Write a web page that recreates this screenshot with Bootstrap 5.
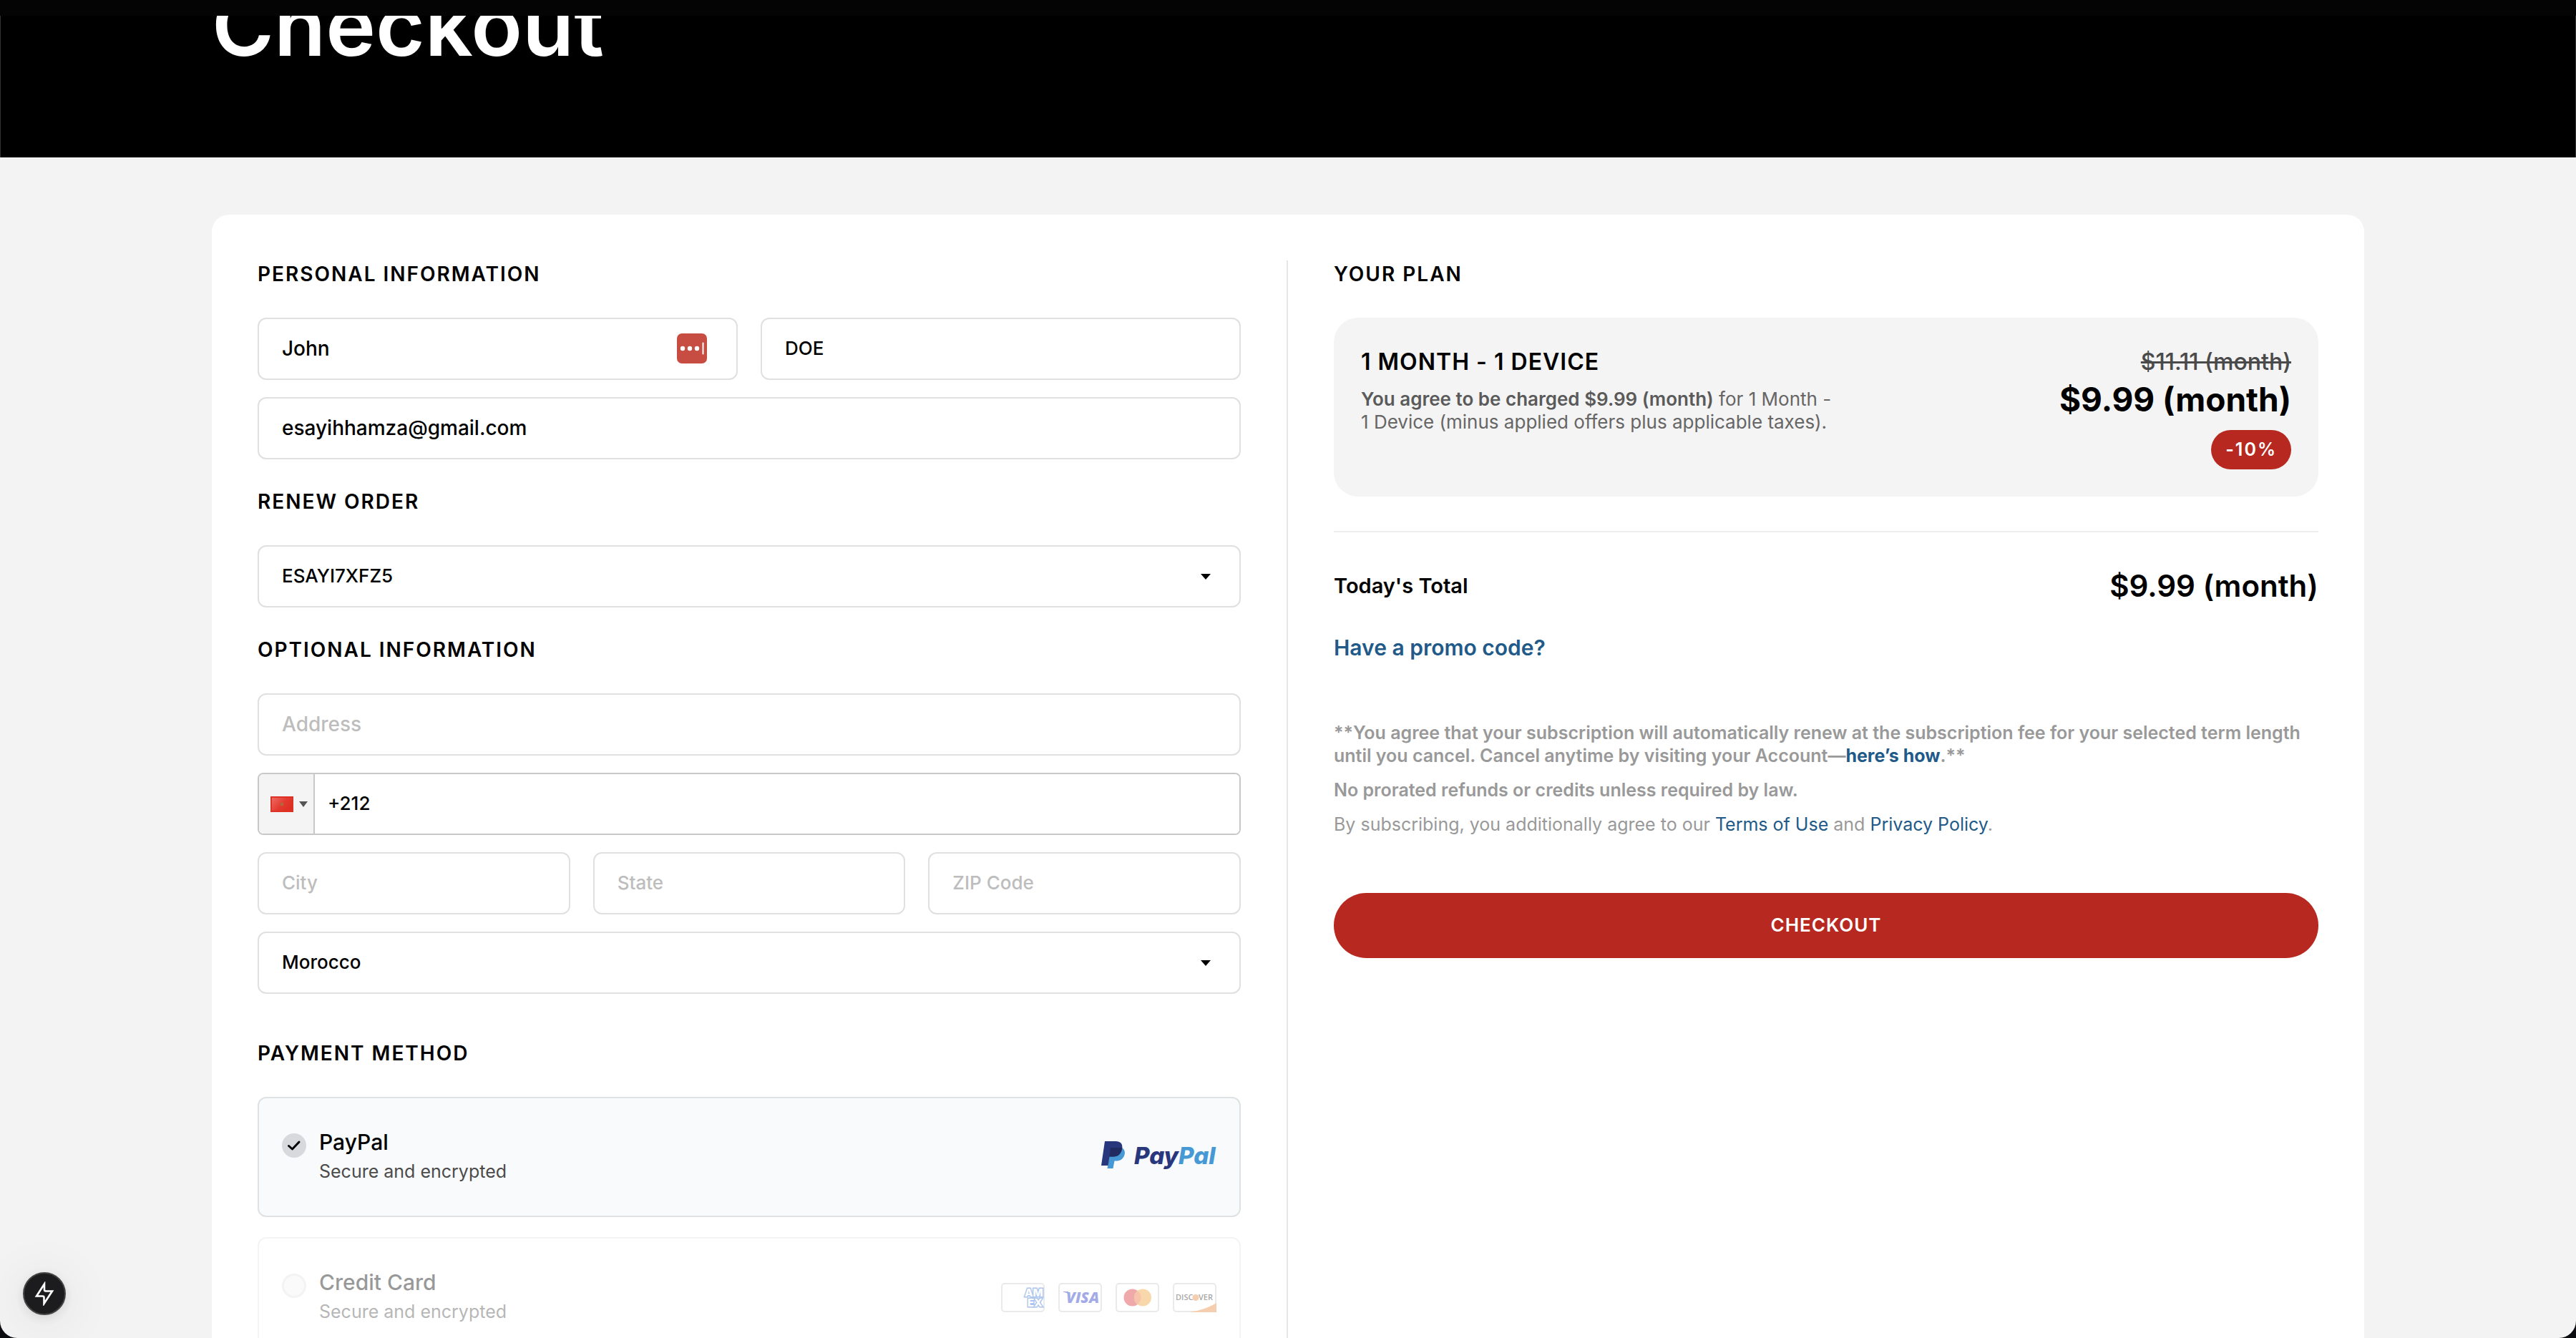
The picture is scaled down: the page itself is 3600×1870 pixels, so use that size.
<!DOCTYPE html>
<html lang="en">
<head>
<meta charset="utf-8">
<meta name="viewport" content="width=device-width, initial-scale=1">
<title>Checkout</title>
<link href="https://cdn.jsdelivr.net/npm/bootstrap@5.3.0/dist/css/bootstrap.min.css" rel="stylesheet">
<style>
  :root { --brand: #b72920; --line: #dfe0e0; --link: #215a88; }
  html { background: #0b0d10; }
  body { font-family: Inter, "Open Sans", sans-serif; color: #000; background: transparent; font-size: 26px; }
  a { color: var(--link); text-decoration: none; }
  .app-window { height: 100vh; overflow: hidden; background: #f3f3f3; border-radius: 0 0 24px 24px; }
  .site-bar { height: 22px; background: #040404; z-index: 5; }
  .wrap { width: 100%; max-width: 3008px; margin-inline: auto; }
  .hero { height: 220px; padding-bottom: 125px; background: #000; color: #fff; box-shadow: inset 1px 0 #333, inset -1px 0 #333; }
  .hero h1 { font-size: 118px; line-height: 120px; font-weight: 600; }
  .sheet { margin-top: 80px; padding: 64px; min-height: 1800px; background: #fff; border-radius: 24px; }
  .sheet-row { min-height: 1672px; }
  .pane-left { padding-right: 64px; border-right: 2px solid #e6e6e6; }
  .pane-right { padding-left: 64px; }
  .section-title { font-size: 28px; line-height: 38px; font-weight: 600; letter-spacing: 2px; text-transform: uppercase; margin: 40px 0 42px; }
  .section-title.first { margin-top: 0; }
  .section-title.spaced { margin-top: 64px; }
  .stack { display: flex; flex-direction: column; gap: 24px; }
  .fields { display: flex; gap: 32px; }
  .fields > * { flex: 1 1 0; min-width: 0; }
  .field { height: 87px; padding: 0 32px 2px; border: 2px solid var(--line); border-radius: 12px; font-size: 26px; font-weight: 500; color: #000; background-color: #fff; }
  .field.big { font-size: 28px; }
  .field::placeholder { color: #bdbdbd; opacity: 1; }
  select.field { background-image: url("data:image/svg+xml,%3Csvg xmlns='http://www.w3.org/2000/svg' viewBox='0 0 14 8'%3E%3Cpath d='M0 0h14L7 8z'/%3E%3C/svg%3E"); background-size: 14px 8px; background-position: right 40px center; }
  .pass-icon { right: 43px; top: 22px; width: 42px; height: 42px; }
  .phone { height: 87px; border: 2px solid #c8c8c8; border-radius: 8px; overflow: hidden; }
  .flag-btn { width: 78px; padding: 0 0 0 16px; gap: 8px; background: #f4f4f4; border: 0; border-right: 2px solid #c8c8c8; }
  .phone .field { height: auto; border: 0; border-radius: 0; padding: 0 18px 2px; }
  .pay-list { display: flex; flex-direction: column; gap: 28px; }
  .pay-option { height: 168px; padding: 0 32px; border: 2px solid #dfe2e2; border-radius: 12px; }
  .pay-option.selected { background: #f9fafc; }
  .pay-option.muted { border-color: #f4f4f4; }
  .pay-option.muted > * { opacity: .4; }
  .pay-radio { width: 34px; height: 34px; margin: 8px 18px 0 0; border: 3px solid #e2e2e2; background-color: #f5f5f5; }
  .pay-radio:checked { border: 0; background-color: #d8d9dc; background-size: 20px 20px; background-image: url("data:image/svg+xml,%3Csvg xmlns='http://www.w3.org/2000/svg' viewBox='0 0 20 20'%3E%3Cpath d='M2.500 10.500l5 4.500 9.500-10' fill='none' stroke='%23000' stroke-width='3' stroke-linecap='round' stroke-linejoin='round'/%3E%3C/svg%3E"); }
  .pay-name { display: block; font-size: 30px; line-height: 40px; font-weight: 500; }
  .pay-note { display: block; font-size: 25px; line-height: 42px; color: #4b4b4b; }
  .pay-brands { gap: 19px; }
  .plan { min-height: 250px; padding: 42px 38px 38px; background: #f4f4f4; border-radius: 34px; }
  .plan-name { font-size: 32px; line-height: 40px; font-weight: 600; letter-spacing: 1px; margin: 0 0 16px; }
  .plan-text { font-size: 26px; line-height: 32px; color: #666; max-width: 670px; }
  .plan-text strong, .terms strong { font-weight: 600; }
  .plan-text strong { color: #5a5a5a; }
  .old-price { font-size: 32px; line-height: 40px; font-weight: 500; color: #4a4a4a; }
  .new-price { font-size: 46px; line-height: 60px; font-weight: 700; margin: 2px 0 13px; }
  .off-badge { display: inline-block; padding: 0 20px; font-size: 25px; line-height: 55px; font-weight: 600; letter-spacing: 2px; color: #fff; background: var(--brand); border-radius: 28px; }
  .rule { height: 2px; margin: 48px 0 45px; background: #eee; border: 0; opacity: 1; }
  .total-row { line-height: 60px; font-weight: 600; }
  .total-label { font-size: 29px; }
  .total-value { font-size: 42px; }
  .promo { display: inline-block; margin-top: 36px; font-size: 30px; line-height: 40px; font-weight: 600; }
  .terms { margin-top: 82px; font-size: 25px; line-height: 32px; color: #999; }
  .terms p { margin-bottom: 16px; }
  .checkout-btn { margin-top: 80px; height: 91px; padding: 0 0 2px; border: 0; border-radius: 46px; color: #fff; background: var(--brand); font-size: 26px; font-weight: 600; letter-spacing: 1px; }
  .dev-btn { left: 32px; bottom: 32px; width: 60px; height: 60px; padding: 0; border: 2px solid #444; border-radius: 50%; background: #1c1c1e; box-shadow: 0 8px 70px 10px rgba(0,0,0,.06), 0 4px 16px rgba(0,0,0,.1); }
</style>
</head>
<body>
<div class="app-window">
  <div class="site-bar fixed-top"></div>
  <header class="hero d-flex align-items-end">
    <div class="wrap"><h1 class="m-0">Checkout</h1></div>
  </header>

  <main class="wrap sheet">
    <form class="row g-0 sheet-row">
      <div class="col-6 pane-left">
        <h2 class="section-title first">Personal information</h2>
        <div class="stack">
          <div class="fields">
            <div class="position-relative">
              <input class="form-control field big" type="text" value="John" aria-label="First name">
              <svg class="pass-icon position-absolute" viewBox="0 0 42 42" aria-hidden="true"><rect width="42" height="42" rx="7" fill="#c74c42"/><g fill="#fff"><circle cx="8" cy="21" r="3.200"/><circle cx="18" cy="21" r="3.200"/><circle cx="28" cy="21" r="3.200"/><rect x="35.500" y="12.500" width="2" height="17" rx="1"/></g></svg>
            </div>
            <div><input class="form-control field" type="text" value="DOE" aria-label="Last name"></div>
          </div>
          <input class="form-control field big" type="email" value="esayihhamza@gmail.com" aria-label="Email">
        </div>

        <h2 class="section-title">Renew order</h2>
        <select class="form-select field" aria-label="Renew order"><option>ESAYI7XFZ5</option></select>

        <h2 class="section-title">Optional information</h2>
        <div class="stack">
          <input class="form-control field big" type="text" placeholder="Address" aria-label="Address">
          <div class="phone d-flex">
            <button class="flag-btn d-flex align-items-center flex-shrink-0" type="button" aria-label="Country code">
              <svg width="32" height="22" viewBox="0 0 32 22" aria-hidden="true"><defs><linearGradient id="fg" x2="1" y2=".6"><stop stop-color="#ef6f68"/><stop offset=".6" stop-color="#e33a2f"/><stop offset="1" stop-color="#de2f24"/></linearGradient></defs><rect x="1" y="1" width="30" height="20" fill="url(#fg)" stroke="#dd3327" stroke-width="2"/><circle cx="16" cy="11" r="2.500" fill="#b3653d"/></svg>
              <svg width="12" height="8" viewBox="0 0 12 8" aria-hidden="true"><path d="M0 0h12L6 8z" fill="#555"/></svg>
            </button>
            <input class="form-control field" type="tel" value="+212" aria-label="Phone">
          </div>
          <div class="fields">
            <input class="form-control field" type="text" placeholder="City" aria-label="City">
            <input class="form-control field" type="text" placeholder="State" aria-label="State">
            <input class="form-control field" type="text" placeholder="ZIP Code" aria-label="ZIP Code">
          </div>
          <select class="form-select field" aria-label="Country"><option>Morocco</option></select>
        </div>

        <h2 class="section-title spaced">Payment method</h2>
        <div class="pay-list">
          <label class="pay-option selected d-flex align-items-center justify-content-between" for="pm-paypal">
            <span class="d-flex align-items-start">
              <input class="form-check-input pay-radio flex-shrink-0" type="radio" name="pm" id="pm-paypal" checked>
              <span><span class="pay-name">PayPal</span><span class="pay-note">Secure and encrypted</span></span>
            </span>
            <svg width="161" height="46" viewBox="0 0 161 46" role="img" aria-label="PayPal">
              <path d="M13 10h15.500c4 2 5.300 6 4 10-1.700 6-6 8.500-12 8.500h-2L16.500 39H8.500z" fill="#4699d4"/>
              <path d="M5 1h15.500c6 0 9.500 3.500 8.800 9.500C28 18 24 22.500 17 22.500h-5.500L9.500 35H0z" fill="#29377d"/>
              <path d="M13 10h16.300C28.500 18 24 22.500 17 22.500h-5.500z" fill="#222b60"/>
              <text x="46" y="33" font-family="Inter, sans-serif" font-size="33" font-weight="800" font-style="italic" fill="#29377d">Pay<tspan fill="#4699d4">Pal</tspan></text>
            </svg>
          </label>
          <label class="pay-option muted d-flex align-items-center justify-content-between" for="pm-card">
            <span class="d-flex align-items-start">
              <input class="form-check-input pay-radio flex-shrink-0" type="radio" name="pm" id="pm-card">
              <span><span class="pay-name">Credit Card</span><span class="pay-note">Secure and encrypted</span></span>
            </span>
            <span class="pay-brands d-flex">
              <svg width="61" height="41" viewBox="0 0 61 41" role="img" aria-label="Amex"><rect x="1" y="1" width="59" height="39" rx="4" fill="#fff" stroke="#ccc" stroke-width="2"/><g font-family="Inter, sans-serif" font-weight="800" font-size="15" fill="#fff" stroke="#2f6fd0" stroke-width="3" paint-order="stroke"><text x="33" y="19">AM</text><text x="37" y="33">EX</text></g></svg>
              <svg width="61" height="41" viewBox="0 0 61 41" role="img" aria-label="Visa"><rect x="1" y="1" width="59" height="39" rx="4" fill="#fff" stroke="#ccc" stroke-width="2"/><path d="M7 12h7l3 8-4-5c-2-1.500-4-2-6-2z" fill="#1a2fc4"/><text x="11" y="28" font-family="Open Sans, sans-serif" font-weight="800" font-style="italic" font-size="21" fill="#1a2fc4">VISA</text></svg>
              <svg width="61" height="41" viewBox="0 0 61 41" role="img" aria-label="Mastercard"><rect x="1" y="1" width="59" height="39" rx="4" fill="#fff" stroke="#ccc" stroke-width="2"/><circle cx="23.500" cy="20.500" r="12" fill="#d82a2e"/><circle cx="38" cy="20.500" r="12" fill="#f0a030"/><path d="M30.800 10.900a12 12 0 0 1 0 19.200 12 12 0 0 1 0-19.200" fill="#ee6a30"/></svg>
              <svg width="61" height="41" viewBox="0 0 61 41" role="img" aria-label="Discover"><rect x="1" y="1" width="59" height="39" rx="4" fill="#fff" stroke="#ccc" stroke-width="2"/><path d="M23 41c15-2 28-7 38-13v13z" fill="#e78639"/><g font-family="Open Sans, sans-serif" font-weight="600" font-size="11" fill="#222"><text x="4" y="24">DISC</text><text x="36" y="24">VER</text></g><circle cx="32" cy="20.500" r="4.500" fill="#e78639"/></svg>
            </span>
          </label>
        </div>
      </div>

      <div class="col-6 pane-right">
        <h2 class="section-title first">Your plan</h2>
        <section class="plan d-flex justify-content-between">
          <div>
            <h3 class="plan-name">1 MONTH - 1 DEVICE</h3>
            <p class="plan-text m-0"><strong>You agree to be charged $9.99 (month)</strong> for 1 Month - <br>1 Device (minus applied offers plus applicable taxes).</p>
          </div>
          <div class="text-end">
            <div class="old-price"><s>$11.11 (month)</s></div>
            <div class="new-price">$9.99 (month)</div>
            <span class="off-badge">-10%</span>
          </div>
        </section>
        <hr class="rule">
        <div class="total-row d-flex justify-content-between">
          <span class="total-label">Today's Total</span>
          <span class="total-value">$9.99 (month)</span>
        </div>
        <a class="promo" href="#">Have a promo code?</a>
        <div class="terms">
          <p><strong>**You agree that your subscription will automatically renew at the subscription fee for your selected term length until you cancel. Cancel anytime by visiting your Account—<a class="fw-bold" href="#">here’s how</a>.**</strong></p>
          <p><strong>No prorated refunds or credits unless required by law.</strong></p>
          <p class="m-0">By subscribing, you additionally agree to our <a href="#">Terms of Use</a> and <a href="#">Privacy Policy</a>.</p>
        </div>
        <button class="btn checkout-btn w-100" type="submit">CHECKOUT</button>
      </div>
    </form>
  </main>
  <button class="dev-btn position-fixed d-flex align-items-center justify-content-center" type="button" aria-label="Developer tools">
    <svg width="28" height="34" viewBox="0 0 28 34" fill="none" stroke="#fff" stroke-width="2.600" aria-hidden="true"><path d="M14 3.500L3 20.500h8.500q2 0 2 2V31L25 13.500h-9q-2 0-2-2z"/></svg>
  </button>
</div>
<script src="https://cdn.jsdelivr.net/npm/bootstrap@5.3.0/dist/js/bootstrap.bundle.min.js"></script>
</body>
</html>
